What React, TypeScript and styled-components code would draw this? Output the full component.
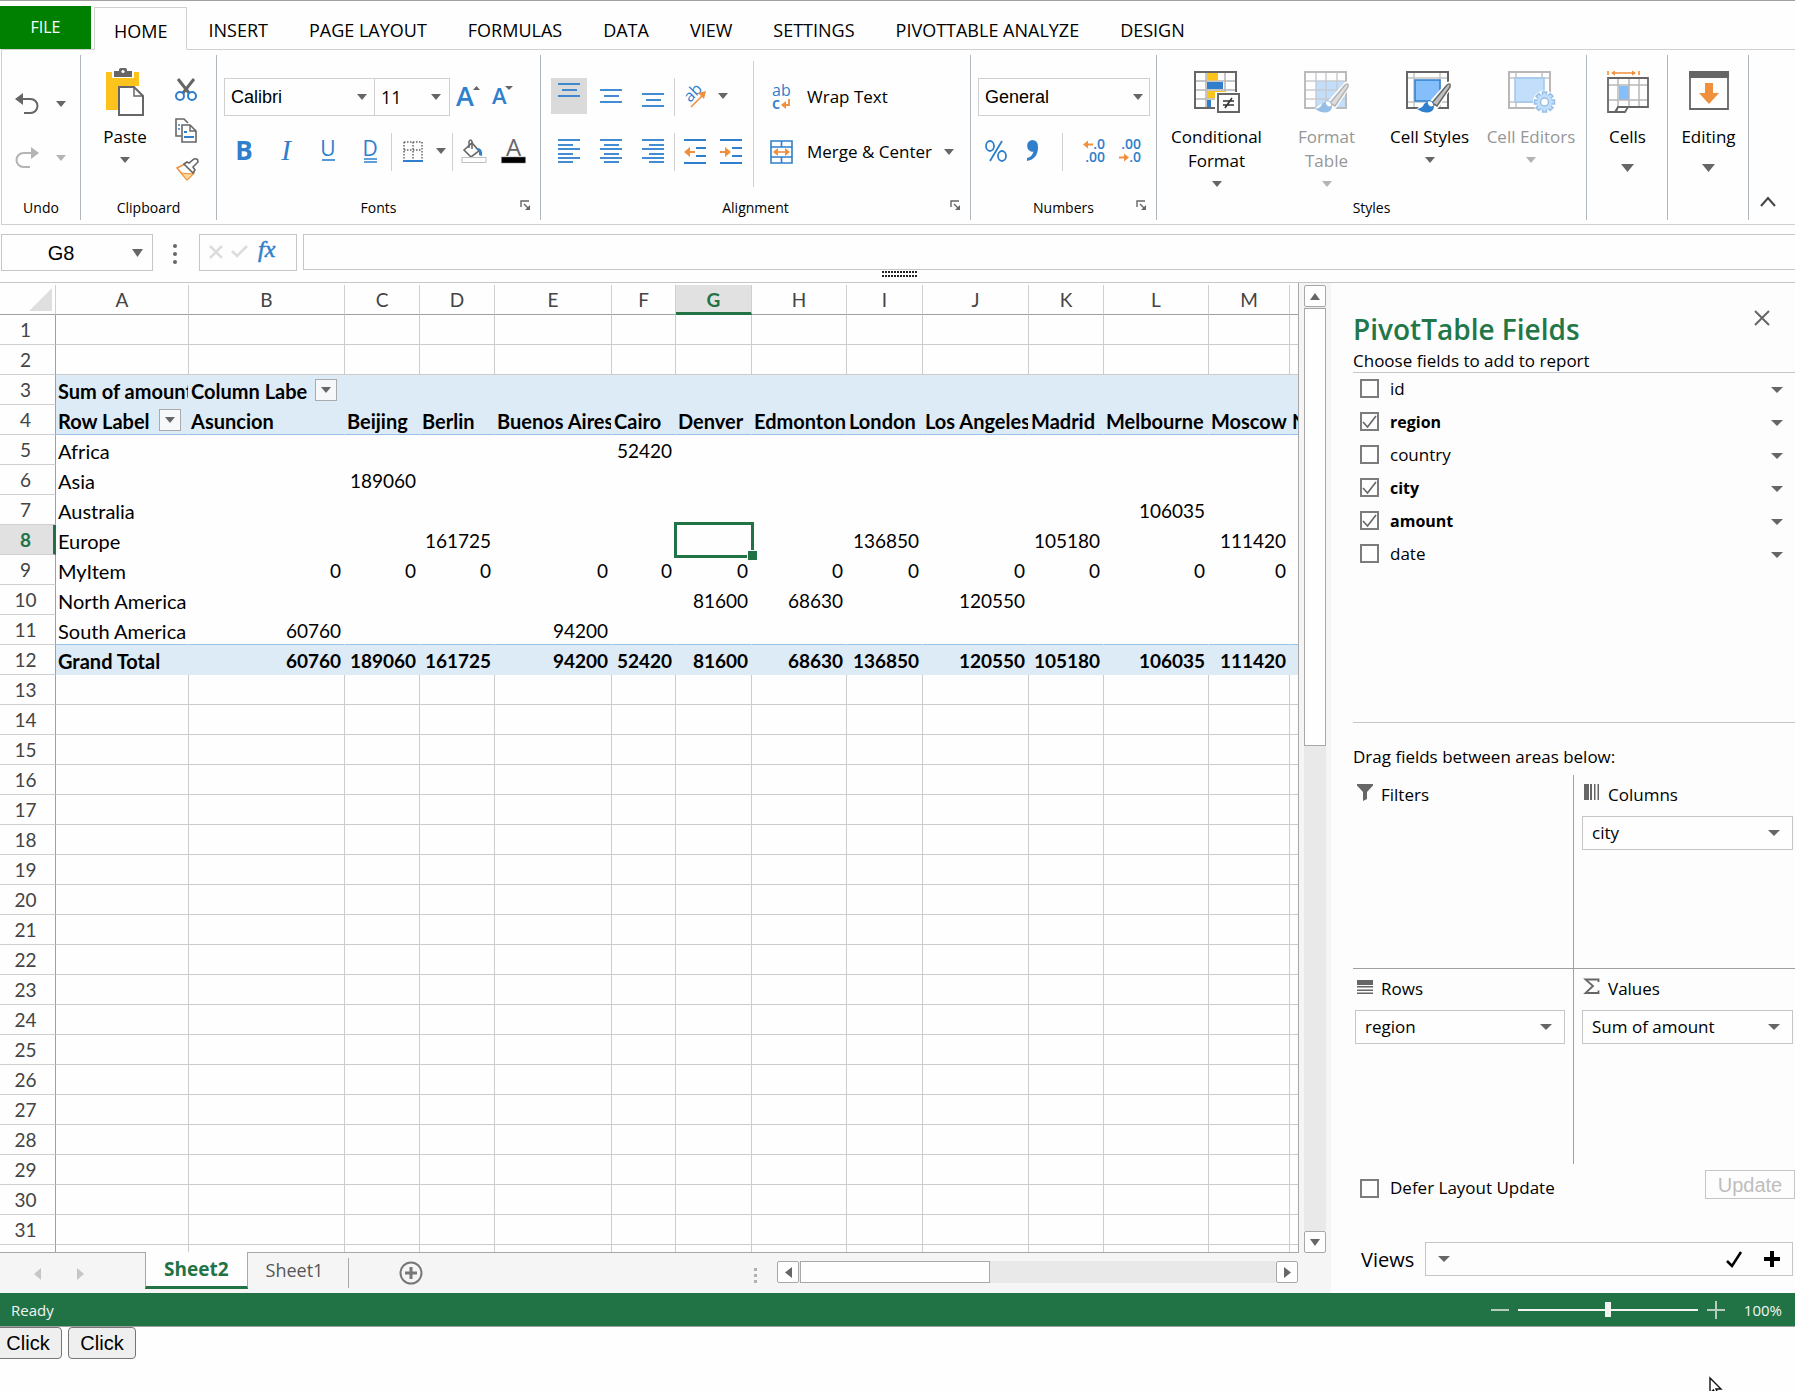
import React, { ReactNode } from 'react';
import styled, { createGlobalStyle, css } from 'styled-components';

const ui = '"Open Sans", "Noto Sans", sans-serif';
const arial = '"Liberation Sans", Arial, sans-serif';
const sheetFont = 'Lato, "Noto Sans", sans-serif';
const blue = '#2f7fcc';
const grey = '#666';
const orange = '#f08f3c';
const green = '#217346';

const GlobalStyle = createGlobalStyle`
  * { box-sizing: border-box; }
  body { margin: 0; background: #fefefe; overflow-x: hidden; }
  button, input, select { margin: 0; padding: 0; font: inherit; color: inherit; }
  svg { display: block; flex: none; overflow: visible; }
`;

const Shell = styled.div`
  position: relative;
  min-height: 100vh;
  overflow: hidden;
  border-top: 1px solid #a0a0a0;
  font-family: ${ui};
  font-size: 17px;
  line-height: 24px;
  color: #000;
`;

/* ---------- Ribbon tabs ---------- */

const TabBar = styled.nav`
  display: flex;
  align-items: flex-end;
  height: 48px;
  position: relative;
`;

const FileTab = styled.button`
  width: 91px;
  height: 43px;
  margin-right: 3px;
  padding-bottom: 2px;
  border: 0;
  background: #008000;
  color: #fff;
  font-size: 16px;
`;

const Tab = styled.button<{ $active?: boolean }>`
  height: 43px;
  margin-right: 1px;
  padding: 4px 19px 0;
  border: 1px solid transparent;
  background: none;
  font-size: 18px;
  white-space: nowrap;
  ${(p) =>
    p.$active &&
    css`
      margin-bottom: -1px;
      border-color: #d0d0d0;
      border-bottom-color: #fefefe;
      background: #fefefe;
    `}
`;

/* ---------- Ribbon ---------- */

const Ribbon = styled.section`
  display: flex;
  height: 176px;
  margin-left: 1px;
  border: solid #d0d0d0;
  border-width: 1px 0 1px 1px;
`;

const Group = styled.div<{ $w: number }>`
  display: flex;
  flex-direction: column;
  flex: none;
  width: ${(p) => p.$w}px;
  margin: 5px 0 4px;
  border-right: 1px solid #b0b8bd;
`;

const GroupBody = styled.div<{ $pad?: number }>`
  display: flex;
  flex: 1;
  padding-left: ${(p) => p.$pad ?? 0}px;
`;

const GroupFooter = styled.div`
  position: relative;
  height: 24px;
  text-align: center;
  font-size: 14px;
`;

const Launcher = styled.button`
  position: absolute;
  right: 9px;
  top: 4px;
  border: 0;
  background: none;
`;

const Rows = styled.div<{ $pad?: number }>`
  display: flex;
  flex-direction: column;
  gap: 17px;
  padding: 23px 0 0 ${(p) => p.$pad ?? 0}px;
`;

const Row = styled.div`
  display: flex;
  height: 38px;
`;

const Tool = styled.button<{ $w?: number; $on?: boolean }>`
  display: flex;
  align-items: center;
  justify-content: center;
  flex: none;
  width: ${(p) => p.$w ?? 36}px;
  height: 36px;
  border: 0;
  background: ${(p) => (p.$on ? '#dadada' : 'none')};
`;

const Spaced = styled.div`
  display: flex;
  gap: 6px;
  margin-right: 3px;
`;

const Rule = styled.div<{ $l?: number; $r?: number }>`
  flex: none;
  width: 1px;
  height: 38px;
  margin: 0 ${(p) => p.$r ?? 2}px 0 ${(p) => p.$l ?? 0}px;
  background: #d0d0d0;
`;

const TallRule = styled.div`
  width: 1px;
  height: 126px;
  margin: 6px 0 0 4px;
  background: #d0d0d0;
`;

const LabeledTool = styled.button`
  display: flex;
  align-items: center;
  gap: 12px;
  height: 38px;
  border: 0;
  background: none;
  white-space: nowrap;
`;

const IconSlot = styled.span`
  display: flex;
  justify-content: center;
  width: 28px;
`;

const BigButton = styled.button<{ $w: number; $gap?: number }>`
  display: flex;
  flex-direction: column;
  align-items: center;
  flex: none;
  width: ${(p) => p.$w}px;
  padding: 13px 0 0 1px;
  border: 0;
  background: none;
  &:disabled { color: #969696; }
  > span { display: block; margin: 9px 0 ${(p) => p.$gap ?? 8}px; }
`;

const UndoColumn = styled.div`
  display: flex;
  flex-direction: column;
  gap: 18px;
  padding: 31px 0 0 7px;
  > div { display: flex; height: 36px; }
`;

const ClipColumn = styled.div`
  display: flex;
  flex-direction: column;
  padding-top: 15px;
  > button { height: 40px; }
`;

const Collapse = styled.button`
  align-self: flex-end;
  margin: 0 0 16px 11px;
  border: 0;
  background: none;
`;

/* ---------- Drop-downs ---------- */

const SelectWrap = styled.span<{ $w?: number; $h: number; $font?: string; $line?: string; $overlap?: boolean }>`
  position: relative;
  display: block;
  flex: none;
  width: ${(p) => (p.$w ? p.$w + 'px' : '100%')};
  height: ${(p) => p.$h}px;
  margin-left: ${(p) => (p.$overlap ? -1 : 0)}px;
  select {
    appearance: none;
    width: 100%;
    height: 100%;
    padding: 0 28px 0 ${(p) => (p.$font ? 6 : 9)}px;
    border: 1px solid ${(p) => p.$line ?? '#d0d0d0'};
    border-radius: 0;
    background: #fefefe;
    font-family: ${(p) => p.$font ?? ui};
    font-size: ${(p) => (p.$font ? 18 : 17)}px;
  }
`;

const SelectArrow = styled.span<{ $right: number }>`
  position: absolute;
  right: ${(p) => p.$right}px;
  top: 50%;
  transform: translateY(-50%);
  pointer-events: none;
`;

/* ---------- Formula bar ---------- */

const FormulaBar = styled.section`
  display: flex;
  align-items: flex-start;
  padding: 9px 0 0 1px;
`;

const NameBox = styled.div`
  display: flex;
  align-items: center;
  width: 152px;
  height: 37px;
  border: 1px solid #c6c6c6;
  input {
    width: 118px;
    border: 0;
    outline: 0;
    background: none;
    text-align: center;
    font-family: ${arial};
    font-size: 20px;
  }
  button { margin-left: 12px; border: 0; background: none; }
`;

const Dots = styled.div`
  display: flex;
  flex-direction: column;
  gap: 4px;
  width: 46px;
  padding: 10px 2px 0 0;
  align-items: center;
  i { width: 4px; height: 4px; border-radius: 2px; background: ${grey}; }
`;

const FxBox = styled.div`
  display: flex;
  align-items: center;
  gap: 8px;
  width: 98px;
  height: 37px;
  margin-right: 6px;
  padding: 0 0 2px 9px;
  border: 1px solid #c6c6c6;
  button { border: 0; background: none; }
`;

const FormulaInput = styled.input`
  flex: 1;
  height: 36px;
  border: 1px solid #c6c6c6;
  border-right: 0;
  background: none;
`;

const Splitter = styled.div`
  display: flex;
  justify-content: center;
  height: 12px;
  padding: 0 0 0 4px;
  border-bottom: 1px solid #c6c6c6;
`;

/* ---------- Sheet ---------- */

const Workspace = styled.main`
  display: flex;
`;

const SheetColumn = styled.section`
  display: flex;
  flex-direction: column;
  flex: 1;
  min-width: 0;
  background: #f5f5f5;
`;

const SheetRow = styled.div`
  display: flex;
  flex: 1 1 0;
  min-height: 0;
`;

const Viewport = styled.div`
  flex: 1;
  min-width: 0;
  padding-top: 2px;
  overflow: hidden;
  background: #fefefe;
  border: solid #a8a8a8;
  border-width: 0 1px 1px 0;
`;

const Grid = styled.table`
  table-layout: fixed;
  border-collapse: separate;
  border-spacing: 0;
  width: 1365px;
  font-family: ${sheetFont};
  font-size: 19px;
  line-height: 24px;
  th { font-weight: 400; color: #444; padding: 0; height: 30px; }
`;

const ColHead = styled.th<{ $on?: boolean }>`
  border-right: 1px solid #d0d0d0;
  border-bottom: 1px solid #a0a0a0;
  ${(p) =>
    p.$on &&
    css`
      && { color: ${green}; font-weight: 700; padding-top: 2px; }
      background: #e1e1e1;
      border-bottom: 3px solid ${green};
    `}
`;

const RowHead = styled.th<{ $on?: boolean }>`
  border-right: 1px solid #a0a0a0;
  border-bottom: 1px solid #d0d0d0;
  && { padding-right: 4px; }
  ${(p) =>
    p.$on &&
    css`
      && { color: ${green}; font-weight: 700; padding-right: 2px; }
      background: #e1e1e1;
      border-right: 3px solid ${green};
    `}
`;

const Corner = styled.th`
  border-right: 1px solid #d0d0d0;
  border-bottom: 1px solid #a0a0a0;
  svg { margin-left: 29px; }
`;

type CellKind = 'plain' | 'body' | 'head' | 'headLine' | 'bodyLine';
const Cell = styled.td<{ $kind: CellKind; $bold?: boolean; $num?: boolean }>`
  position: relative;
  height: 30px;
  padding: 2px ${(p) => (p.$num ? 3 : 0)}px 0 ${(p) => (p.$num ? 0 : 2)}px;
  border: solid ${(p) => (p.$kind === 'plain' ? '#cccccc' : 'transparent')};
  border-width: 0 1px 1px 0;
  text-align: ${(p) => (p.$num ? 'right' : 'left')};
  font-size: ${(p) => (p.$num ? 19 : 20)}px;
  font-weight: ${(p) => (p.$bold ? 700 : 400)};
  white-space: nowrap;
  overflow: ${(p) => (p.$kind === 'body' ? 'visible' : 'hidden')};
  background: ${(p) => (p.$kind === 'head' || p.$kind === 'headLine' ? '#ddebf6' : 'transparent')};
  ${(p) => (p.$kind === 'headLine' || p.$kind === 'bodyLine') && 'border-bottom-color: #9bc2e6;'}
`;

const CellWithFilter = styled.div`
  display: flex;
  align-items: center;
  gap: 8px;
  padding-right: 7px;
  > span { flex: 1; overflow: hidden; }
`;

const FilterButton = styled.button`
  display: flex;
  align-items: center;
  justify-content: center;
  align-self: flex-start;
  width: 22px;
  height: 22px;
  border: 1px solid #ababab;
  background: #f7f8fa;
`;

const Selection = styled.div`
  position: absolute;
  inset: -3px -3px -4px -2px;
  z-index: 1;
  border: 3px solid ${green};
  &::after {
    content: '';
    position: absolute;
    right: -6px;
    bottom: -5px;
    width: 9px;
    height: 9px;
    border: solid #fefefe;
    border-width: 1px 0 0 1px;
    background: ${green};
  }
`;

const VBar = styled.div`
  display: flex;
  flex-direction: column;
  width: 32px;
  padding: 2px 5px 0;
`;

const ScrollButton = styled.button`
  display: flex;
  align-items: center;
  justify-content: center;
  flex: none;
  width: 22px;
  height: 22px;
  border: 1px solid #a8a8a8;
  border-radius: 2px;
  background: #fefefe;
`;

const VTrack = styled.div`
  display: flex;
  flex-direction: column;
  flex: 1;
  padding-top: 1px;
  background: #e9e9e9;
  div { flex: 9; border: 1px solid #a8a8a8; background: #fefefe; }
  &::after { content: ''; flex: 10; }
`;

const SheetTabs = styled.div`
  display: flex;
  height: 40px;
`;

const TabArrow = styled.button`
  width: 43px;
  padding: 15px 0 0;
  border: 0;
  background: none;
  svg { margin: 0 auto; }
`;

const TabArrows = styled.div`
  display: flex;
  align-items: flex-start;
  padding: 0 43px 0 16px;
`;

const SheetTab = styled.button<{ $active?: boolean }>`
  align-self: flex-start;
  height: 36px;
  padding: 0 18px 3px;
  border: 0;
  background: none;
  color: #555;
  font-size: 18px;
  ${(p) =>
    p.$active &&
    css`
      margin-top: -1px;
      height: 37px;
      padding-bottom: 0;
      border: solid #a8a8a8;
      border-width: 0 1px 3px;
      border-bottom-color: ${green};
      background: #fefefe;
      color: ${green};
      font-size: 19px;
      font-weight: 700;
    `}
`;

const TabRule = styled.div`
  width: 1px;
  height: 30px;
  margin: 5px 50px 0 7px;
  background: #a8a8a8;
`;

const AddSheet = styled.button`
  align-self: flex-start;
  margin-top: 8px;
  border: 0;
  background: none;
`;

const TabSplit = styled.div`
  display: flex;
  flex-direction: column;
  gap: 3px;
  margin: 15px 20px 0 auto;
  i { width: 3px; height: 3px; background: #b0b0b0; }
`;

const HBar = styled.div`
  display: flex;
  width: 521px;
  height: 22px;
  margin: 8px 33px 0 0;
`;

const HTrack = styled.div`
  flex: 1;
  padding-left: 1px;
  background: #e9e9e9;
  div { width: 40%; height: 22px; border: 1px solid #a8a8a8; background: #fefefe; }
`;

/* ---------- Pivot pane ---------- */

const Pane = styled.aside`
  flex: none;
  width: 464px;
  padding: 27px 0 17px 22px;
  background: #fdfdfd;
`;

const PaneHead = styled.header`
  display: flex;
  justify-content: space-between;
  align-items: flex-start;
  padding-right: 25px;
  h2 {
    margin: 0;
    color: #227748;
    font-size: 28px;
    font-weight: 600;
    line-height: 38px;
  }
  button { border: 0; background: none; }
`;

const Choose = styled.p`
  margin: 0;
  padding-top: 1px;
  line-height: 23px;
  border-bottom: 1px solid #c6c6c6;
`;

const FieldList = styled.ul`
  list-style: none;
  margin: 0;
  padding: 0;
  min-height: 350px;
  border-bottom: 1px solid #c6c6c6;
  li {
    display: flex;
    align-items: center;
    justify-content: space-between;
    height: 33px;
    padding: 0 12px 2px 7px;
  }
  li > button { border: 0; background: none; padding-top: 2px; }
`;

const CheckLabel = styled.label<{ $bold?: boolean }>`
  display: flex;
  align-items: center;
  gap: 11px;
  font-weight: ${(p) => (p.$bold ? 700 : 400)};
  font-size: ${(p) => (p.$bold ? 16 : 17)}px;
  > span { position: relative; }
  input {
    appearance: none;
    display: block;
    width: 19px;
    height: 19px;
    border: 2px solid #7c7c7c;
    background: #fefefe;
  }
  svg { position: absolute; left: 2px; top: 2px; }
`;

const DragText = styled.p`
  margin: 0;
  padding: 22px 0 6px;
`;

const Areas = styled.div`
  display: grid;
  grid-template-columns: 221px 1fr;
`;

const Area = styled.div<{ $left?: boolean; $top?: boolean }>`
  height: ${(p) => (p.$top ? 194 : 195)}px;
  padding: ${(p) => (p.$left ? '8px 8px 0 2px' : '8px 2px 0 8px')};
  border: solid #a0a0a0;
  border-width: 0 ${(p) => (p.$left ? 1 : 0)}px ${(p) => (p.$top ? 1 : 0)}px 0;
`;

const AreaTitle = styled.h3`
  display: flex;
  align-items: center;
  gap: 8px;
  margin: 0 0 9px;
  padding-left: 2px;
  font-size: 17px;
  font-weight: 400;
  svg { margin-bottom: 5px; }
`;

const DeferRow = styled.div`
  display: flex;
  justify-content: space-between;
  height: 36px;
  margin: 6px 0 36px;
  padding-left: 7px;
`;

const UpdateButton = styled.button`
  width: 90px;
  height: 29px;
  border: 1px solid #c6c6c6;
  background: none;
  font-family: ${arial};
  font-size: 20px;
  &:disabled { color: #bdbdbd; }
`;

const ViewsRow = styled.div`
  display: flex;
  align-items: center;
  gap: 11px;
  padding: 0 2px 0 8px;
  label { padding-top: 2px; font-size: 20px; }
`;

const ViewsBox = styled.div`
  display: flex;
  align-items: center;
  flex: 1;
  height: 34px;
  padding: 0 12px;
  border: 1px solid #c6c6c6;
  input { flex: 1; min-width: 0; border: 0; outline: 0; background: none; }
  button { border: 0; background: none; }
  button + button { margin-left: 22px; }
`;

/* ---------- Status bar ---------- */

const StatusBar = styled.footer`
  display: flex;
  align-items: center;
  justify-content: space-between;
  height: 34px;
  padding: 0 13px 0 11px;
  border-bottom: 1px solid #a0a0a0;
  background: ${green};
  color: #f0f5f2;
  font-size: 15px;
`;

const Zoom = styled.div`
  display: flex;
  align-items: center;
  button { border: 0; background: none; }
  output { width: 57px; text-align: right; }
  input {
    appearance: none;
    width: 180px;
    height: 16px;
    margin: 0 9px;
    background: none;
  }
  input::-webkit-slider-runnable-track { height: 2px; background: #f0f5f2; }
  input::-webkit-slider-thumb {
    appearance: none;
    width: 6px;
    height: 15px;
    margin-top: -7px;
    background: #f0f5f2;
  }
`;

const ClickRow = styled.div`
  display: flex;
  gap: 6px;
  margin-left: -6px;
  button {
    width: 68px;
    height: 32px;
    border: 1px solid #767676;
    border-radius: 4px;
    background: #efefef;
    font-family: ${arial};
    font-size: 20px;
  }
`;

const Pointer = styled.div`
  position: absolute;
  right: 72px;
  bottom: -7px;
`;

/* ---------- Icons ---------- */

const Caret = ({ w = 10, h = 6, color = grey, dir = 'down' }: { w?: number; h?: number; color?: string; dir?: string }) => {
  const d: Record<string, string> = {
    down: `M0 0H${w}L${w / 2} ${h}Z`,
    up: `M0 ${h}H${w}L${w / 2} 0Z`,
    left: `M${w} 0V${h}L0 ${h / 2}Z`,
    right: `M0 0V${h}L${w} ${h / 2}Z`,
  };
  return (
    <svg width={w} height={h}>
      <path d={d[dir]} fill={color} />
    </svg>
  );
};

const UndoIcon = ({ flip }: { flip?: boolean }) => (
  <svg width="24" height="22" viewBox="0 0 24 22">
    <g transform={flip ? 'matrix(-1 0 0 1 24 0)' : undefined} stroke={flip ? '#b4b4b4' : grey} fill="none" strokeWidth="2">
      <path d="M3 6H15.500A7 7 0 0 1 15.500 20H9" />
      <path d="M0 6L8 0V12Z" fill={flip ? '#b4b4b4' : grey} stroke="none" />
    </g>
  </svg>
);

const PasteIcon = () => (
  <svg width="38" height="48" viewBox="0 0 38 48">
    <path d="M0 4H33V18H12V42H0Z" fill="#fbc31b" />
    <path d="M6 4h22v6H6z" fill="#fefefe" />
    <path d="M8 3h5V1.500Q13 0 15 0h4q2 0 2 1.500V3h5v6H8z" fill={grey} />
    <circle cx="17" cy="3.500" r="1.600" fill="#fefefe" />
    <path d="M13 19H28L37 28V47H13Z" fill="#fefefe" stroke={grey} strokeWidth="2" />
    <path d="M28 19V28H37" fill="none" stroke={grey} strokeWidth="1.500" />
  </svg>
);

const CutIcon = () => (
  <svg width="22" height="24" viewBox="0 0 22 24">
    <path d="M3 1L14 15M19 1L8 15" stroke={grey} strokeWidth="3" />
    <circle cx="5" cy="18" r="4" fill="none" stroke={blue} strokeWidth="2" />
    <circle cx="17" cy="18" r="4" fill="none" stroke={blue} strokeWidth="2" />
  </svg>
);

const CopyIcon = () => (
  <svg width="22" height="25" viewBox="0 0 22 25">
    <path d="M6 18H1V1H9L13 5" fill="none" stroke={grey} strokeWidth="1.600" />
    <path d="M3 7h2M3 11h2" stroke={blue} strokeWidth="1.600" />
    <path d="M7 7H15L21 13V24H7Z" fill="#fefefe" stroke={grey} strokeWidth="1.600" />
    <path d="M15 7V13H21" fill="none" stroke={grey} strokeWidth="1.400" />
    <path d="M9 14h3M9 19h10" stroke={blue} strokeWidth="1.800" />
  </svg>
);

const PainterIcon = () => (
  <svg width="24" height="24" viewBox="0 0 24 24">
    <path d="M1 10L9 6L18 15L11 22Z" fill="#fefefe" stroke={orange} strokeWidth="1.500" />
    <path d="M5 15L17 16L11 22Z" fill="#fbd79a" stroke={orange} />
    <path d="M8 6L11 4L13 5L18 1Q22 0 22 4L17 9L19 12L17 15Z" fill="#fefefe" stroke={grey} strokeWidth="1.600" />
  </svg>
);

const FontSizeIcon = ({ up }: { up?: boolean }) => (
  <svg width="23" height="24" viewBox="0 0 23 24">
    <text x="-1" y={up ? 22 : 20} fontFamily="Open Sans" fontSize={up ? 27 : 22} fontWeight="600" fill={blue}>A</text>
    <path d={up ? 'M16 6h7l-3.500-4z' : 'M12 2h8l-4 4z'} fill={grey} />
  </svg>
);

const Glyph = ({ ch }: { ch: 'B' | 'I' | 'U' | 'D' }) => {
  const serif = ch === 'I';
  return (
    <svg width="20" height="24" viewBox="0 0 20 24">
      <text
        x="9"
        y={ch === 'B' || serif ? 21 : 17}
        textAnchor="middle"
        fontFamily={serif ? 'Liberation Serif' : 'Open Sans'}
        fontStyle={serif ? 'italic' : 'normal'}
        fontWeight={ch === 'B' ? 700 : 400}
        fontSize={ch === 'B' ? 26 : serif ? 29 : 21}
        fill={blue}
      >
        {ch}
      </text>
      {ch === 'U' && <path d="M3 21h13" stroke={blue} strokeWidth="1.600" />}
      {ch === 'D' && <path d="M3 20h13M3 23h13" stroke={blue} strokeWidth="1.500" />}
    </svg>
  );
};

const BorderIcon = () => (
  <svg width="20" height="21" viewBox="0 0 20 21">
    <path d="M1 1H19M1 9H19M1 1V18M10 1V18M19 1V18" fill="none" stroke={grey} strokeWidth="1.500" strokeDasharray="1.500 1.500" />
    <path d="M0 20H20" stroke={blue} strokeWidth="2" />
  </svg>
);

const FillIcon = () => (
  <svg width="26" height="25" viewBox="0 0 26 25">
    <path d="M3 11L11 4L18 12L10 18Z" fill="none" stroke={grey} strokeWidth="1.600" />
    <path d="M8 9V2.500Q9.500 -.5 11 2.500V10" fill="none" stroke={grey} strokeWidth="1.500" />
    <path d="M15 9Q22 8 21 17L18 16L18 12Z" fill={blue} />
    <rect x="1" y="18.500" width="24" height="5" fill="#fefefe" stroke="#c0c0c0" />
  </svg>
);

const FontColorIcon = () => (
  <svg width="25" height="25" viewBox="0 0 25 25">
    <text x="12.500" y="17" textAnchor="middle" fontFamily="Open Sans" fontSize="24" fill={grey}>A</text>
    <rect x="0.500" y="18" width="24" height="6" fill="#000" stroke="#888" strokeWidth=".5" />
  </svg>
);

const LinesIcon = ({ lines, h = 24 }: { lines: [number, number, number][]; h?: number }) => (
  <svg width="22" height={h} viewBox={`0 0 22 ${h}`}>
    {lines.map(([x, y, w]) => (
      <path key={y} d={`M${x} ${y}h${w}`} stroke={blue} strokeWidth="1.800" />
    ))}
  </svg>
);

const fiveLines = (x: number): [number, number, number][] => [
  [0, 1, 22], [x, 6, 15], [0, 10, 22], [x, 15, 15], [0, 19, 22], [x, 23, 15],
];

const IndentIcon = ({ out }: { out?: boolean }) => (
  <svg width="22" height="25" viewBox="0 0 22 25">
    <path d="M0 1H22M12 9H22M12 17H22M0 24H22" stroke={blue} strokeWidth="1.800" />
    <path d={out ? 'M0 13l6-5v4h5v2H6v4z' : 'M11 13l-6-5v4H0v2h5v4z'} fill={orange} />
  </svg>
);

const OrientationIcon = () => (
  <svg width="24" height="24" viewBox="0 0 24 24">
    <text x="0" y="0" transform="translate(7 19) rotate(-45)" fontFamily="Open Sans" fontSize="16" fill={blue}>ab</text>
    <path d="M8 23L20 11" stroke={orange} strokeWidth="1.600" />
    <path d="M23 7L15 9L21 15Z" fill={orange} />
  </svg>
);

const WrapIcon = () => (
  <svg width="18" height="26" viewBox="0 0 18 26">
    <text x="0" y="12" fontFamily="Open Sans" fontSize="16" fill={blue}>ab</text>
    <text x="0" y="25" fontFamily="Open Sans" fontSize="16" fontWeight="600" fill={blue}>c</text>
    <path d="M17 15V21H13" fill="none" stroke={orange} strokeWidth="1.800" />
    <path d="M9 21l5-4v8z" fill={orange} />
  </svg>
);

const MergeIcon = () => (
  <svg width="23" height="24" viewBox="0 0 23 24">
    <path d="M1 1H22V23H1ZM1 7H22M1 17H22M11.500 1V7M11.500 17V23" fill="none" stroke={blue} strokeWidth="1.600" />
    <path d="M6 12H17" stroke={orange} strokeWidth="1.600" />
    <path d="M3 12l5-4v8zM20 12l-5-4v8z" fill={orange} />
  </svg>
);

const PercentIcon = () => (
  <svg width="22" height="22" viewBox="0 0 22 22" fill="none" stroke={blue} strokeWidth="1.800">
    <ellipse cx="5" cy="6" rx="4" ry="5" />
    <ellipse cx="17" cy="16" rx="4" ry="5" />
    <path d="M17 1L5 21" />
  </svg>
);

const CommaIcon = () => (
  <svg width="12" height="22" viewBox="0 0 12 22">
    <path d="M6 0A6 6 0 0 0 5 11.500Q6 12 7.500 11.500Q6 17 1 18V21Q12 19 12 7Q12 0 6 0Z" fill={blue} />
  </svg>
);

const DecimalIcon = ({ less }: { less?: boolean }) => (
  <svg width="24" height="24" viewBox="0 0 24 24" fontFamily="Open Sans" fontSize="14" fontWeight="600" fill={blue}>
    <text x="23" y="10" textAnchor="end">{less ? '.00' : '.0'}</text>
    <text x="23" y="23" textAnchor="end">{less ? '.0' : '.00'}</text>
    {less ? (
      <path d="M1 17.500h5v-3l5 4-5 4v-3H1z" fill={orange} />
    ) : (
      <path d="M11 4.500H6v-3l-5 4 5 4v-3h5z" fill={orange} />
    )}
  </svg>
);

const LauncherIcon = () => (
  <svg width="11" height="11" viewBox="0 0 11 11" fill="none" stroke={grey} strokeWidth="1.400">
    <path d="M1 7V1H9M4 4L8 8" />
    <path d="M10 5V10H5Z" fill={grey} stroke="none" />
  </svg>
);

const Brush = ({ fade }: { fade?: boolean }) => (
  <g>
    <path d="M24 30L41 11Q47 9 46 16L33 36L28 42L11 42Q9 36 20 32Z" fill="#fefefe" />
    <path d="M26 32L41 14Q45 11 44 16L31 35Z" fill={fade ? '#dcdcdc' : '#c0c0c0'} stroke={fade ? '#b4b4b4' : grey} strokeWidth="1.500" />
    <path d="M11 38Q17 37 18 33Q22 29 26 32Q30 36 26 40Q20 44 11 38Z" fill={fade ? '#97bfe6' : blue} />
    <path d="M21 31Q24 28 27 32Q29 35 26 36Q22 36 21 31Z" fill="#fefefe" stroke={fade ? '#97bfe6' : blue} />
  </g>
);

const ConditionalIcon = () => (
  <svg width="46" height="48" viewBox="0 0 46 48">
    <g transform="translate(0 3)">
      <path d="M1 1H42V37H1ZM1 10H42M1 19H42M1 28H42M12 1V37M31 1V37" fill="#fefefe" stroke="#b4b4b4" strokeWidth="1.500" />
      <path d="M13 1.500h11v8H13zM13 20h18v7H13z" fill="#fbc31b" />
      <path d="M13 11h16v7H13zM13 29h4v8h-4z" fill={blue} />
      <path d="M1 1H42V37H1Z" fill="none" stroke={grey} strokeWidth="2" />
      <path d="M21 21H46V43H21Z" fill="#fefefe" />
      <path d="M24 23H45V41H24Z" fill="#fefefe" stroke={grey} strokeWidth="2" />
      <path d="M29 30H40M29 34H40M38 27L31 37" stroke="#333" strokeWidth="1.600" />
    </g>
  </svg>
);

const FormatTableIcon = () => (
  <svg width="46" height="48" viewBox="0 0 46 48">
    <g transform="translate(0 3)">
      <path d="M12 10H42V37H12Z" fill="#c2defa" />
      <path d="M1 10H42M1 19H42M1 28H42M12 1V37M22 1V37M33 1V37" stroke="#c8ccd2" strokeWidth="1.500" />
      <path d="M1 1H42V37H1Z" fill="none" stroke="#bbb" strokeWidth="2" />
      <Brush fade />
    </g>
  </svg>
);

const Gear = () => (
  <g transform="translate(36.500 31)">
    <circle r="11.500" fill="#fefefe" />
    {[0, 45, 90, 135].map((a) => (
      <path key={a} d="M-2 -10H2V10H-2Z" transform={`rotate(${a})`} fill="#c2defa" stroke="#96bfe8" strokeWidth="1.500" />
    ))}
    <circle r="7.500" fill="#c2defa" />
    <circle r="4" fill="#fefefe" stroke="#96bfe8" strokeWidth="1.500" />
  </g>
);

const CellStyleIcon = ({ gear }: { gear?: boolean }) => (
  <svg width="47" height="48" viewBox="0 0 47 48">
    <g transform="translate(0 3)">
      <path d="M1 7H42M1 31H42M8 1V37M34 1V37" stroke="#c4c4c4" strokeWidth="1.500" />
      <path d="M1 1H42V37H1Z" fill="none" stroke={gear ? '#b8b8b8' : grey} strokeWidth="2" />
      <path d={gear ? 'M7 7H36V31H7Z' : 'M9 9H34V30H9Z'} fill={gear ? '#c2defa' : '#84bffb'} stroke={gear ? '#a0c8ee' : blue} strokeWidth="1.500" />
      {gear ? <Gear /> : <Brush />}
    </g>
  </svg>
);

const CellsIcon = () => (
  <svg width="42" height="48" viewBox="0 0 42 48">
    <g transform="translate(0 3)">
      <path d="M1 0V4M32 0V4M6 2H28" stroke={orange} strokeWidth="1.600" />
      <path d="M4 2l4-2.500v5zM29 2l-4-2.500v5z" fill={orange} />
      <path d="M12 15h10v14H12z" fill="#84bffb" />
      <path d="M1 14H41M1 29H41M11 7V36M22 7V36M32 7V36" stroke="#b8b8b8" strokeWidth="1.500" />
      <path d="M1 7H41V36H11L8 41H1ZM11 36L9 41H18L21 36" fill="none" stroke={grey} strokeWidth="1.800" />
    </g>
  </svg>
);

const EditingIcon = () => (
  <svg width="40" height="48" viewBox="0 0 40 48">
    <path d="M1 4H39V41H1Z" fill="#fefefe" stroke={grey} strokeWidth="1.800" />
    <path d="M0 3H40V10H0Z" fill={grey} />
    <path d="M16 15h8v10h6L20 36L10 25h6z" fill={orange} />
  </svg>
);

const Stroke = ({ w, h, d, color = grey, sw = 2 }: { w: number; h: number; d: string; color?: string; sw?: number }) => (
  <svg width={w} height={h} viewBox={`0 0 ${w} ${h}`}>
    <path d={d} fill="none" stroke={color} strokeWidth={sw} />
  </svg>
);

const CornerIcon = () => (
  <svg width="23" height="23" viewBox="0 0 23 23">
    <path d="M23 0V23H0Z" fill="#dfdfdf" />
  </svg>
);

const FxIcon = () => (
  <svg width="24" height="24" viewBox="0 0 24 24">
    <text x="2" y="17" fontFamily="Liberation Serif" fontStyle="italic" fontSize="24" fill={blue} stroke={blue} strokeWidth=".5">fx</text>
  </svg>
);

const GripIcon = () => (
  <svg width="36" height="6" viewBox="0 0 36 6">
    <path d="M0 1H36M0 5H36" stroke="#222" strokeWidth="2" strokeDasharray="2 1" />
  </svg>
);

const AreaIcon = ({ kind }: { kind: string }) => (
  <svg width="16" height="17" viewBox="0 0 16 17">
    {kind === 'Filters' && <path d="M0 0H16V1.500L10 8V15L6 17V8L0 1.500Z" fill={grey} />}
    {kind === 'Columns' && <path d="M0 0h5v16H0zM6 0h2v16H6zM10 0h1.500v16H10zM13.500 0H15v16h-1.500z" fill={grey} />}
    {kind === 'Rows' && <path d="M0 2h16v5H0zM0 8h16v1.500H0zM0 11.500h16V13H0zM0 14.500h16V16H0z" fill={grey} />}
    {kind === 'Values' && <path d="M14.500 4V1.500H1.500L9 8L1.500 15H14.500V12.500" fill="none" stroke={grey} strokeWidth="1.800" />}
  </svg>
);

/* ---------- Building blocks ---------- */

const DropDown = ({ label, value, right, ...rest }: { label: string; value: string; right: number; $w?: number; $h: number; $font?: string; $line?: string; $overlap?: boolean }) => (
  <SelectWrap {...rest}>
    <select aria-label={label} defaultValue={value}>
      <option>{value}</option>
    </select>
    <SelectArrow $right={right}>
      <Caret w={rest.$line ? 12 : 10} />
    </SelectArrow>
  </SelectWrap>
);

const RibbonGroup = ({ w, label, pad, launcher, children }: { w: number; label?: string; pad?: number; launcher?: boolean; children: ReactNode }) => (
  <Group $w={w}>
    <GroupBody $pad={pad}>{children}</GroupBody>
    <GroupFooter>
      {label}
      {launcher && (
        <Launcher aria-label={label + ' options'}>
          <LauncherIcon />
        </Launcher>
      )}
    </GroupFooter>
  </Group>
);

const CheckField = ({ label, checked }: { label: string; checked?: boolean }) => (
  <CheckLabel $bold={checked}>
    <span>
      <input type="checkbox" defaultChecked={checked} />
      {checked && <Stroke w={15} h={15} d="M1 8L5.500 13L14 2" sw={1.600} />}
    </span>
    {label}
  </CheckLabel>
);

/* ---------- Data ---------- */

const tabs = ['HOME', 'INSERT', 'PAGE LAYOUT', 'FORMULAS', 'DATA', 'VIEW', 'SETTINGS', 'PIVOTTABLE ANALYZE', 'DESIGN'];

const columns: [string, number][] = [
  ['A', 133], ['B', 156], ['C', 75], ['D', 75], ['E', 117], ['F', 64], ['G', 76],
  ['H', 95], ['I', 76], ['J', 106], ['K', 75], ['L', 105], ['M', 81], ['', 75],
];

const data: Record<number, Record<string, string>> = {
  3: { A: 'Sum of amount', B: 'Column Labels' },
  4: {
    A: 'Row Label', B: 'Asuncion', C: 'Beijing', D: 'Berlin', E: 'Buenos Aires', F: 'Cairo', G: 'Denver',
    H: 'Edmonton', I: 'London', J: 'Los Angeles', K: 'Madrid', L: 'Melbourne', M: 'Moscow', '': 'New York',
  },
  5: { A: 'Africa', F: '52420' },
  6: { A: 'Asia', C: '189060' },
  7: { A: 'Australia', L: '106035' },
  8: { A: 'Europe', D: '161725', I: '136850', K: '105180', M: '111420' },
  9: { A: 'MyItem', B: '0', C: '0', D: '0', E: '0', F: '0', G: '0', H: '0', I: '0', J: '0', K: '0', L: '0', M: '0' },
  10: { A: 'North America', G: '81600', H: '68630', J: '120550' },
  11: { A: 'South America', B: '60760', E: '94200' },
  12: {
    A: 'Grand Total', B: '60760', C: '189060', D: '161725', E: '94200', F: '52420', G: '81600',
    H: '68630', I: '136850', J: '120550', K: '105180', L: '106035', M: '111420',
  },
};

const kindOf = (row: number): CellKind => {
  if (row === 4) return 'headLine';
  if (row === 3 || row === 12) return 'head';
  if (row === 11) return 'bodyLine';
  return row > 4 && row < 12 ? 'body' : 'plain';
};

const fields: [string, boolean][] = [
  ['id', false], ['region', true], ['country', false], ['city', true], ['amount', true], ['date', false],
];

const SheetGrid = () => (
  <Grid>
    <colgroup>
      <col width={56} />
      {columns.map(([name, w]) => (
        <col key={name} width={w} />
      ))}
    </colgroup>
    <thead>
      <tr>
        <Corner aria-label="Select all">
          <CornerIcon />
        </Corner>
        {columns.map(([name]) => (
          <ColHead key={name} $on={name === 'G'}>{name}</ColHead>
        ))}
      </tr>
    </thead>
    <tbody>
      {Array.from({ length: 32 }, (_, i) => i + 1).map((r) => (
        <tr key={r}>
          <RowHead $on={r === 8}>{r}</RowHead>
          {columns.map(([c]) => {
            const text = data[r]?.[c] ?? '';
            const filter = (r === 3 && c === 'B') || (r === 4 && c === 'A');
            return (
              <Cell key={c} $kind={kindOf(r)} $bold={r < 5 || r === 12} $num={/^\d+$/.test(text)}>
                {filter ? (
                  <CellWithFilter>
                    <span>{text}</span>
                    <FilterButton aria-label={'Filter ' + text}>
                      <Caret />
                    </FilterButton>
                  </CellWithFilter>
                ) : (
                  text
                )}
                {r === 8 && c === 'G' && <Selection />}
              </Cell>
            );
          })}
        </tr>
      ))}
    </tbody>
  </Grid>
);

const PivotArea = ({ title, value, left, top }: { title: string; value?: string; left?: boolean; top?: boolean }) => (
  <Area $left={left} $top={top}>
    <AreaTitle>
      <AreaIcon kind={title} />
      {title}
    </AreaTitle>
    {value && <DropDown label={title} value={value} right={13} $h={34} $line="#c6c6c6" />}
  </Area>
);

export default function App() {
  return (
    <Shell>
      <GlobalStyle />
      <TabBar>
        <FileTab>FILE</FileTab>
        {tabs.map((t, i) => (
          <Tab key={t} $active={i === 0}>{t}</Tab>
        ))}
      </TabBar>

      <Ribbon>
        <RibbonGroup w={79} label="Undo">
          <UndoColumn>
            <div>
              <Tool aria-label="Undo"><UndoIcon /></Tool>
              <Tool $w={32} aria-label="Undo list"><Caret /></Tool>
            </div>
            <div>
              <Tool aria-label="Redo"><UndoIcon flip /></Tool>
              <Tool $w={32} aria-label="Redo list"><Caret color="#b4b4b4" /></Tool>
            </div>
          </UndoColumn>
        </RibbonGroup>

        <RibbonGroup w={136} label="Clipboard" pad={6}>
          <BigButton $w={75}>
            <PasteIcon />
            <span>Paste</span>
            <Caret />
          </BigButton>
          <ClipColumn>
            <Tool $w={48} aria-label="Cut"><CutIcon /></Tool>
            <Tool $w={48} aria-label="Copy"><CopyIcon /></Tool>
            <Tool $w={52} aria-label="Format painter"><PainterIcon /></Tool>
          </ClipColumn>
        </RibbonGroup>

        <RibbonGroup w={324} label="Fonts" launcher>
          <Rows $pad={7}>
            <Row>
              <DropDown label="Font" value="Calibri" right={8} $w={151} $h={38} $font={arial} />
              <DropDown label="Font size" value="11" right={9} $w={76} $h={38} $font={ui} $overlap />
              <Tool aria-label="Grow font"><FontSizeIcon up /></Tool>
              <Tool aria-label="Shrink font"><FontSizeIcon /></Tool>
            </Row>
            <Row>
              <Tool $w={42} aria-label="Bold"><Glyph ch="B" /></Tool>
              <Tool $w={42} aria-label="Italic"><Glyph ch="I" /></Tool>
              <Tool $w={42} aria-label="Underline"><Glyph ch="U" /></Tool>
              <Tool $w={41} aria-label="Double underline"><Glyph ch="D" /></Tool>
              <Rule $r={3} />
              <Tool aria-label="Borders"><BorderIcon /></Tool>
              <Tool $w={20} aria-label="Border styles"><Caret /></Tool>
              <Rule $l={1} $r={3} />
              <Tool aria-label="Fill color"><FillIcon /></Tool>
              <Tool $w={43} aria-label="Font color"><FontColorIcon /></Tool>
            </Row>
          </Rows>
        </RibbonGroup>

        <RibbonGroup w={430} label="Alignment" pad={10} launcher>
          <Rows>
            <Row>
              <Spaced>
                <Tool $on aria-label="Top align"><LinesIcon h={28} lines={[[0, 2, 22], [4, 8, 15], [0, 14, 22]]} /></Tool>
                <Tool aria-label="Middle align"><LinesIcon h={28} lines={[[0, 8, 22], [4, 14, 15], [0, 20, 22]]} /></Tool>
                <Tool aria-label="Bottom align"><LinesIcon h={28} lines={[[0, 12, 22], [4, 18, 15], [0, 24, 22]]} /></Tool>
              </Spaced>
              <Rule />
              <Tool aria-label="Orientation"><OrientationIcon /></Tool>
              <Tool $w={20} aria-label="Orientation list"><Caret /></Tool>
            </Row>
            <Row>
              <Spaced>
                <Tool aria-label="Align left"><LinesIcon lines={fiveLines(0)} /></Tool>
                <Tool aria-label="Center"><LinesIcon lines={fiveLines(4)} /></Tool>
                <Tool aria-label="Align right"><LinesIcon lines={fiveLines(7)} /></Tool>
              </Spaced>
              <Rule />
              <Tool aria-label="Decrease indent"><IndentIcon out /></Tool>
              <Tool aria-label="Increase indent"><IndentIcon /></Tool>
            </Row>
          </Rows>
          <TallRule />
          <Rows $pad={13}>
            <LabeledTool>
              <IconSlot><WrapIcon /></IconSlot>
              Wrap Text
            </LabeledTool>
            <LabeledTool>
              <IconSlot><MergeIcon /></IconSlot>
              Merge &amp; Center
              <Caret />
            </LabeledTool>
          </Rows>
        </RibbonGroup>

        <RibbonGroup w={186} label="Numbers" pad={7} launcher>
          <Rows>
            <Row>
              <DropDown label="Number format" value="General" right={7} $w={172} $h={38} $font={arial} />
            </Row>
            <Row>
              <Tool aria-label="Percent"><PercentIcon /></Tool>
              <Tool aria-label="Comma"><CommaIcon /></Tool>
              <Rule $l={12} $r={13} />
              <Tool aria-label="Increase decimals"><DecimalIcon /></Tool>
              <Tool aria-label="Decrease decimals"><DecimalIcon less /></Tool>
            </Row>
          </Rows>
        </RibbonGroup>

        <RibbonGroup w={430} label="Styles">
          <BigButton $w={118}>
            <ConditionalIcon />
            <span>Conditional<br />Format</span>
            <Caret />
          </BigButton>
          <BigButton $w={102} disabled>
            <FormatTableIcon />
            <span>Format<br />Table</span>
            <Caret color="#b4b4b4" />
          </BigButton>
          <BigButton $w={104}>
            <CellStyleIcon />
            <span>Cell Styles</span>
            <Caret />
          </BigButton>
          <BigButton $w={99} disabled>
            <CellStyleIcon gear />
            <span>Cell Editors</span>
            <Caret color="#b4b4b4" />
          </BigButton>
        </RibbonGroup>

        <RibbonGroup w={81}>
          <BigButton $w={80} $gap={15}>
            <CellsIcon />
            <span>Cells</span>
            <Caret w={13} h={8} />
          </BigButton>
        </RibbonGroup>
        <RibbonGroup w={81}>
          <BigButton $w={80} $gap={15}>
            <EditingIcon />
            <span>Editing</span>
            <Caret w={13} h={8} />
          </BigButton>
        </RibbonGroup>
        <Collapse aria-label="Collapse ribbon">
          <Stroke w={16} h={12} d="M1 10L8 2L15 10" color="#444" />
        </Collapse>
      </Ribbon>

      <FormulaBar>
        <NameBox>
          <input aria-label="Name box" defaultValue="G8" />
          <button aria-label="Names"><Caret w={11} h={8} /></button>
        </NameBox>
        <Dots><i /><i /><i /></Dots>
        <FxBox>
          <button aria-label="Cancel"><Stroke w={14} h={14} d="M1 1L13 13M13 1L1 13" color="#dcdcdc" sw={2.500} /></button>
          <button aria-label="Enter"><Stroke w={17} h={13} d="M1 6L6 11L16 1" color="#dcdcdc" sw={2.500} /></button>
          <button aria-label="Insert function"><FxIcon /></button>
        </FxBox>
        <FormulaInput aria-label="Formula" />
      </FormulaBar>
      <Splitter><GripIcon /></Splitter>

      <Workspace>
        <SheetColumn>
          <SheetRow>
            <Viewport><SheetGrid /></Viewport>
            <VBar>
              <ScrollButton aria-label="Scroll up"><Caret dir="up" h={7} /></ScrollButton>
              <VTrack><div /></VTrack>
              <ScrollButton aria-label="Scroll down"><Caret h={7} /></ScrollButton>
            </VBar>
          </SheetRow>
          <SheetTabs>
            <TabArrows>
              <TabArrow aria-label="Previous sheet"><Caret dir="left" w={7} h={12} color="#c6c6c6" /></TabArrow>
              <TabArrow aria-label="Next sheet"><Caret dir="right" w={7} h={12} color="#c6c6c6" /></TabArrow>
            </TabArrows>
            <SheetTab $active>Sheet2</SheetTab>
            <SheetTab>Sheet1</SheetTab>
            <TabRule />
            <AddSheet aria-label="Add sheet">
              <svg width="24" height="24" viewBox="0 0 24 24" fill="none" stroke="#777">
                <circle cx="12" cy="12" r="10.500" strokeWidth="2" />
                <path d="M12 6V18M6 12H18" strokeWidth="3" />
              </svg>
            </AddSheet>
            <TabSplit><i /><i /><i /></TabSplit>
            <HBar>
              <ScrollButton aria-label="Scroll left"><Caret dir="left" w={7} h={11} /></ScrollButton>
              <HTrack><div /></HTrack>
              <ScrollButton aria-label="Scroll right"><Caret dir="right" w={7} h={11} /></ScrollButton>
            </HBar>
          </SheetTabs>
        </SheetColumn>

        <Pane>
          <PaneHead>
            <h2>PivotTable Fields</h2>
            <button aria-label="Close"><Stroke w={16} h={16} d="M1 1L15 15M15 1L1 15" /></button>
          </PaneHead>
          <Choose>Choose fields to add to report</Choose>
          <FieldList>
            {fields.map(([name, on]) => (
              <li key={name}>
                <CheckField label={name} checked={on} />
                <button aria-label={name + ' options'}><Caret w={12} /></button>
              </li>
            ))}
          </FieldList>
          <DragText>Drag fields between areas below:</DragText>
          <Areas>
            <PivotArea title="Filters" left top />
            <PivotArea title="Columns" value="city" top />
            <PivotArea title="Rows" value="region" left />
            <PivotArea title="Values" value="Sum of amount" />
          </Areas>
          <DeferRow>
            <CheckField label="Defer Layout Update" />
            <UpdateButton disabled>Update</UpdateButton>
          </DeferRow>
          <ViewsRow>
            <label htmlFor="views">Views</label>
            <ViewsBox>
              <Caret w={12} />
              <input id="views" />
              <button aria-label="Apply view"><Stroke w={16} h={17} d="M1 10L6 15L15 1" color="#000" sw={2.500} /></button>
              <button aria-label="Add view"><Stroke w={16} h={16} d="M8 0V16M0 8H16" color="#000" sw={4} /></button>
            </ViewsBox>
          </ViewsRow>
        </Pane>
      </Workspace>

      <StatusBar>
        <span>Ready</span>
        <Zoom>
          <button aria-label="Zoom out"><Stroke w={18} h={18} d="M0 9H18" color="#b5ccbf" /></button>
          <input type="range" aria-label="Zoom" min={0} max={200} defaultValue={100} />
          <button aria-label="Zoom in"><Stroke w={18} h={18} d="M0 9H18M9 0V18" color="#b5ccbf" /></button>
          <output>100%</output>
        </Zoom>
      </StatusBar>
      <ClickRow>
        <button>Click</button>
        <button>Click</button>
      </ClickRow>
      <Pointer>
        <svg width="14" height="21" viewBox="0 0 14 21">
          <path d="M1 1V16L4.500 13L7 19L9.500 18L7 12H12Z" fill="#fff" stroke="#111" strokeWidth="1.400" />
        </svg>
      </Pointer>
    </Shell>
  );
}
